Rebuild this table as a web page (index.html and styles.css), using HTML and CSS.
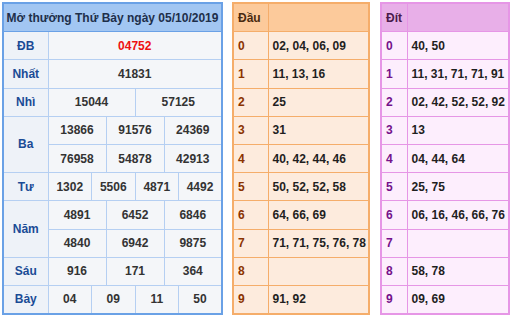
FILE: index.html
```html
<!DOCTYPE html>
<html lang="vi">
<head>
<meta charset="utf-8">
<title>Kết quả xổ số</title>
<link rel="stylesheet" href="styles.css">
</head>
<body>
<div class="wrap">
  <table class="kq">
    <colgroup>
      <col class="c-label">
      <col><col><col><col><col><col><col><col><col><col><col><col>
    </colgroup>
    <thead>
      <tr><th colspan="13" class="title">Mở thưởng Thứ Bảy ngày 05/10/2019</th></tr>
    </thead>
    <tbody>
      <tr><td class="lbl">ĐB</td><td colspan="12" class="db">04752</td></tr>
      <tr><td class="lbl">Nhất</td><td colspan="12">41831</td></tr>
      <tr><td class="lbl">Nhì</td><td colspan="6">15044</td><td colspan="6">57125</td></tr>
      <tr><td class="lbl" rowspan="2">Ba</td><td colspan="4">13866</td><td colspan="4">91576</td><td colspan="4">24369</td></tr>
      <tr><td colspan="4">76958</td><td colspan="4">54878</td><td colspan="4">42913</td></tr>
      <tr><td class="lbl">Tư</td><td colspan="3">1302</td><td colspan="3">5506</td><td colspan="3">4871</td><td colspan="3">4492</td></tr>
      <tr><td class="lbl" rowspan="2">Năm</td><td colspan="4">4891</td><td colspan="4">6452</td><td colspan="4">6846</td></tr>
      <tr><td colspan="4">4840</td><td colspan="4">6942</td><td colspan="4">9875</td></tr>
      <tr><td class="lbl">Sáu</td><td colspan="4">916</td><td colspan="4">171</td><td colspan="4">364</td></tr>
      <tr><td class="lbl">Bảy</td><td colspan="3">04</td><td colspan="3">09</td><td colspan="3">11</td><td colspan="3">50</td></tr>
    </tbody>
  </table>

  <table class="lt dau">
    <colgroup><col class="c-key"><col></colgroup>
    <thead><tr><th>Đầu</th><th></th></tr></thead>
    <tbody>
      <tr><td class="k">0</td><td>02, 04, 06, 09</td></tr>
      <tr><td class="k">1</td><td>11, 13, 16</td></tr>
      <tr><td class="k">2</td><td>25</td></tr>
      <tr><td class="k">3</td><td>31</td></tr>
      <tr><td class="k">4</td><td>40, 42, 44, 46</td></tr>
      <tr><td class="k">5</td><td>50, 52, 52, 58</td></tr>
      <tr><td class="k">6</td><td>64, 66, 69</td></tr>
      <tr><td class="k">7</td><td>71, 71, 75, 76, 78</td></tr>
      <tr><td class="k">8</td><td></td></tr>
      <tr><td class="k">9</td><td>91, 92</td></tr>
    </tbody>
  </table>

  <table class="lt dit">
    <colgroup><col class="c-key"><col></colgroup>
    <thead><tr><th>Đít</th><th></th></tr></thead>
    <tbody>
      <tr><td class="k">0</td><td>40, 50</td></tr>
      <tr><td class="k">1</td><td>11, 31, 71, 71, 91</td></tr>
      <tr><td class="k">2</td><td>02, 42, 52, 52, 92</td></tr>
      <tr><td class="k">3</td><td>13</td></tr>
      <tr><td class="k">4</td><td>04, 44, 64</td></tr>
      <tr><td class="k">5</td><td>25, 75</td></tr>
      <tr><td class="k">6</td><td>06, 16, 46, 66, 76</td></tr>
      <tr><td class="k">7</td><td></td></tr>
      <tr><td class="k">8</td><td>58, 78</td></tr>
      <tr><td class="k">9</td><td>09, 69</td></tr>
    </tbody>
  </table>
</div>
</body>
</html>
```

FILE: styles.css
```css
html, body {
  margin: 0;
  padding: 0;
  background: #ffffff;
}

body {
  font-family: "Liberation Sans", Arial, sans-serif;
  font-size: 12px;
  font-weight: bold;
  color: #333333;
}

.wrap {
  display: flex;
  align-items: flex-start;
  padding: 2px 2px 0 2px;
}

table {
  border-collapse: collapse;
  table-layout: fixed;
}

th, td {
  height: 27.2px;
  padding: 0;
}

/* Left results table */
.kq {
  width: 221px;
  border: 2px solid #6aa1e6;
  margin-right: 9px;
}

.kq .c-label {
  width: 45px;
}

.kq td {
  border: 1px solid #b5cff2;
  background: #f4f6f9;
  text-align: center;
  color: #333333;
}

.kq td.lbl {
  background: #eef2f8;
  color: #1a4b96;
}

.kq td.db {
  color: #ee1111;
}

.kq th.title {
  background: #a2c6f2;
  color: #1e2f4a;
  border: 1px solid #6aa1e6;
  text-align: center;
  font-size: 12px;
}

/* Loto tables */
.lt th, .lt td {
  text-align: left;
  padding-left: 4px;
}

.lt td {
  color: #1f1f1f;
}

.dau {
  width: 138px;
  border: 2px solid #f5ad6a;
  margin-right: 10px;
}

.dau .c-key {
  width: 35px;
}

.dau th {
  background: #fcca9b;
  color: #4a2a10;
  border: 1px solid #f5ad6a;
}

.dau td {
  background: #fdebdd;
  border: 1px solid #f5ad6a;
}

.dau td.k {
  color: #8b3300;
}

.dit {
  width: 130px;
  border: 2px solid #e696e6;
}

.dit .c-key {
  width: 26px;
}

.dit th {
  background: #e8afe8;
  color: #4a1a4a;
  border: 1px solid #e696e6;
}

.dit td {
  background: #fdeefd;
  border: 1px solid #e696e6;
}

.dit td.k {
  color: #74128a;
}
```
